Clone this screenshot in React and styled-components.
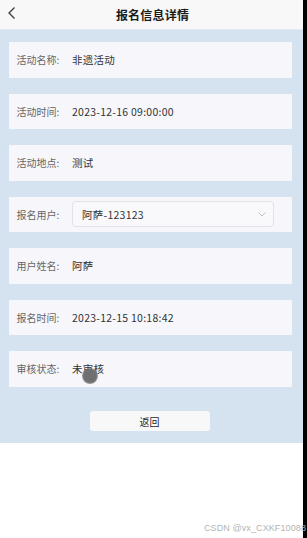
import React from "react";
import styled, { createGlobalStyle } from "styled-components";

const GlobalStyle = createGlobalStyle`
  html, body {
    margin: 0;
    padding: 0;
    background: #ffffff;
  }
  body {
    font-family: "Noto Sans CJK SC", "Noto Sans", sans-serif;
  }
`;

const rows = [
  { label: "活动名称:", value: "非遗活动" },
  { label: "活动时间:", value: "2023-12-16 09:00:00" },
  { label: "活动地点:", value: "测试" },
  { label: "报名用户:", value: "阿萨-123123", select: true },
  { label: "用户姓名:", value: "阿萨" },
  { label: "报名时间:", value: "2023-12-15 10:18:42" },
  { label: "审核状态:", value: "未审核", cursor: true },
];

function App() {
  return (
    <>
      <GlobalStyle />
      <Page>
        <Screen>
          <Header>
            <BackButton>
              <svg width="10" height="14" viewBox="0 0 10 14">
                <path
                  d="M7.5 1.5 L2 7 L7.5 12.5"
                  fill="none"
                  stroke="#3a3a3a"
                  strokeWidth="1.3"
                />
              </svg>
            </BackButton>
            <Title>报名信息详情</Title>
          </Header>
          <Body>
            {rows.map((r) => (
              <Card key={r.label}>
                <Label>{r.label}</Label>
                {r.select ? (
                  <SelectBox>
                    <span>{r.value}</span>
                    <svg width="8" height="5" viewBox="0 0 8 5">
                      <path
                        d="M0.5 0.5 L4 4 L7.5 0.5"
                        fill="none"
                        stroke="#b8b8b8"
                        strokeWidth="0.9"
                      />
                    </svg>
                  </SelectBox>
                ) : (
                  <Value>
                    {r.value}
                    {r.cursor && <Cursor />}
                  </Value>
                )}
              </Card>
            ))}
            <ButtonRow>
              <ReturnButton>返回</ReturnButton>
            </ButtonRow>
          </Body>
          <Watermark>CSDN @vx_CXKF10088</Watermark>
        </Screen>
        <Edge />
      </Page>
    </>
  );
}

export default App;

const Page = styled.div`
  display: flex;
  width: 307px;
  height: 538px;
  overflow: hidden;
`;

const Screen = styled.div`
  position: relative;
  flex: 1;
  display: flex;
  flex-direction: column;
  background: #ffffff;
`;

const Edge = styled.div`
  width: 4px;
  background: #000000;
`;

const Header = styled.div`
  position: relative;
  height: 30px;
  display: flex;
  align-items: center;
  justify-content: center;
  background: #f8f8f8;
  border-bottom: 1px solid #e4ebf2;
  box-sizing: border-box;
`;

const BackButton = styled.div`
  position: absolute;
  left: 7px;
  top: 6px;
  display: flex;
`;

const Title = styled.div`
  font-size: 12px;
  font-weight: 700;
  color: #1a1a1a;
  letter-spacing: 0.2px;
  margin-left: 2px;
`;

const Body = styled.div`
  background: #d5e2ef;
  padding: 12px 11px 12px 9px;
  display: flex;
  flex-direction: column;
  gap: 16px;
`;

const Card = styled.div`
  height: 35.5px;
  background: #f7f7fb;
  display: flex;
  align-items: center;
  padding-left: 7.5px;
  box-sizing: border-box;
`;

const Label = styled.div`
  width: 55.5px;
  flex-shrink: 0;
  font-size: 10px;
  color: #666666;
`;

const Value = styled.div`
  position: relative;
  font-size: 10.5px;
  letter-spacing: 0.25px;
  color: #333333;
`;

const SelectBox = styled.div`
  width: 202px;
  height: 26px;
  box-sizing: border-box;
  border: 1px solid #e2e2e8;
  border-radius: 4px;
  background: #f9f9fc;
  display: flex;
  align-items: center;
  justify-content: space-between;
  padding: 0 7px 0 9px;
  font-size: 10.5px;
  letter-spacing: 0.25px;
  color: #333333;
`;

const Cursor = styled.span`
  position: absolute;
  left: 10px;
  top: 7px;
  width: 16px;
  height: 16px;
  border-radius: 50%;
  background: radial-gradient(circle, #6f6f6f 55%, rgba(111, 111, 111, 0.5) 75%, rgba(111, 111, 111, 0) 100%);
`;

const ButtonRow = styled.div`
  display: flex;
  justify-content: center;
  padding-top: 8.5px;
  padding-right: 2px;
`;

const ReturnButton = styled.div`
  width: 120px;
  height: 20px;
  background: #f8f8f8;
  border-radius: 3px;
  display: flex;
  align-items: center;
  justify-content: center;
  font-size: 10px;
  color: #1f1f1f;
`;

const Watermark = styled.div`
  position: absolute;
  right: -3px;
  bottom: 5px;
  font-family: "Liberation Sans", Arial, sans-serif;
  font-size: 9px;
  color: #b4b4b4;
  letter-spacing: 0.1px;
`;
